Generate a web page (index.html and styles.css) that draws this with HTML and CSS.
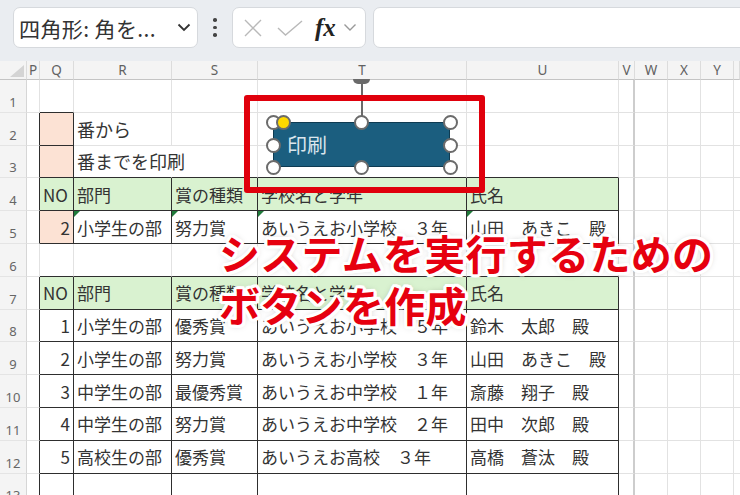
FILE: index.html
```html
<!DOCTYPE html>
<html lang="ja">
<head>
<meta charset="utf-8">
<title>Excel</title>
<link rel="stylesheet" href="styles.css">
</head>
<body>
<div class="app">
  <div class="toolbar">
    <div class="namebox">
      <span class="nb-text">四角形: 角を...</span>
      <svg class="chev" width="14" height="9" viewBox="0 0 14 9"><polyline points="1.5,1.5 7,7 12.5,1.5" fill="none" stroke="#333" stroke-width="1.8"/></svg>
    </div>
    <div class="dots"><i></i><i></i><i></i></div>
    <div class="fbtns">
      <svg class="ico-x" width="20" height="20" viewBox="0 0 20 20"><path d="M2 2 L18 18 M18 2 L2 18" fill="none" stroke="#b9b9b9" stroke-width="1.4"/></svg>
      <svg class="ico-ok" width="26" height="16" viewBox="0 0 26 16"><polyline points="1,8 8.5,15 25,1" fill="none" stroke="#b9b9b9" stroke-width="1.4"/></svg>
      <span class="fx">fx</span>
      <svg class="chev-s" width="14" height="9" viewBox="0 0 14 9"><polyline points="1.5,1.5 7,7 12.5,1.5" fill="none" stroke="#999" stroke-width="1.4"/></svg>
    </div>
    <div class="fbar"></div>
  </div>

  <div class="sheet">
    <div class="row head">
      <div class="corner"><span class="corner-tri"></span></div>
      <div class="ch">P</div><div class="ch">Q</div><div class="ch">R</div><div class="ch">S</div><div class="ch">T</div><div class="ch">U</div><div class="ch">V</div><div class="ch">W</div><div class="ch">X</div><div class="ch">Y</div><div class="ch"></div>
    </div>

    <div class="row">
      <div class="rn">1</div>
      <div class="c"></div><div class="c eb"></div><div class="c"></div><div class="c"></div><div class="c"></div><div class="c"></div><div class="c v"></div><div class="c"></div><div class="c"></div><div class="c"></div><div class="c"></div>
    </div>

    <div class="row">
      <div class="rn">2</div>
      <div class="c er"></div><div class="c b pe"></div><div class="c big">番から</div><div class="c"></div><div class="c"></div><div class="c"></div><div class="c v"></div><div class="c"></div><div class="c"></div><div class="c"></div><div class="c"></div>
    </div>

    <div class="row">
      <div class="rn">3</div>
      <div class="c er"></div><div class="c b pe"></div><div class="c eb over big">番までを印刷</div><div class="c eb"></div><div class="c eb"></div><div class="c eb"></div><div class="c v"></div><div class="c"></div><div class="c"></div><div class="c"></div><div class="c"></div>
    </div>

    <div class="row">
      <div class="rn">4</div>
      <div class="c er"></div><div class="c b gr">NO</div><div class="c b gr">部門</div><div class="c b gr">賞の種類</div><div class="c b gr">学校名と学年</div><div class="c b gr">氏名</div><div class="c v"></div><div class="c"></div><div class="c"></div><div class="c"></div><div class="c"></div>
    </div>

    <div class="row">
      <div class="rn">5</div>
      <div class="c er"></div><div class="c b pe num">2</div><div class="c b flag">小学生の部</div><div class="c b flag">努力賞</div><div class="c b flag">あいうえお小学校　３年</div><div class="c b flag">山田　あきこ　殿</div><div class="c v"></div><div class="c"></div><div class="c"></div><div class="c"></div><div class="c"></div>
    </div>

    <div class="row">
      <div class="rn">6</div>
      <div class="c"></div><div class="c eb"></div><div class="c eb"></div><div class="c eb"></div><div class="c eb"></div><div class="c eb"></div><div class="c v"></div><div class="c"></div><div class="c"></div><div class="c"></div><div class="c"></div>
    </div>

    <div class="row">
      <div class="rn">7</div>
      <div class="c er"></div><div class="c b gr">NO</div><div class="c b gr">部門</div><div class="c b gr">賞の種類</div><div class="c b gr">学校名と学年</div><div class="c b gr">氏名</div><div class="c v"></div><div class="c"></div><div class="c"></div><div class="c"></div><div class="c"></div>
    </div>

    <div class="row">
      <div class="rn">8</div>
      <div class="c er"></div><div class="c b num">1</div><div class="c b">小学生の部</div><div class="c b">優秀賞</div><div class="c b">あいうえお小学校　５年</div><div class="c b">鈴木　太郎　殿</div><div class="c v"></div><div class="c"></div><div class="c"></div><div class="c"></div><div class="c"></div>
    </div>

    <div class="row">
      <div class="rn">9</div>
      <div class="c er"></div><div class="c b num">2</div><div class="c b">小学生の部</div><div class="c b">努力賞</div><div class="c b">あいうえお小学校　３年</div><div class="c b">山田　あきこ　殿</div><div class="c v"></div><div class="c"></div><div class="c"></div><div class="c"></div><div class="c"></div>
    </div>

    <div class="row">
      <div class="rn">10</div>
      <div class="c er"></div><div class="c b num">3</div><div class="c b">中学生の部</div><div class="c b">最優秀賞</div><div class="c b">あいうえお中学校　１年</div><div class="c b">斎藤　翔子　殿</div><div class="c v"></div><div class="c"></div><div class="c"></div><div class="c"></div><div class="c"></div>
    </div>

    <div class="row">
      <div class="rn">11</div>
      <div class="c er"></div><div class="c b num">4</div><div class="c b">中学生の部</div><div class="c b">努力賞</div><div class="c b">あいうえお中学校　２年</div><div class="c b">田中　次郎　殿</div><div class="c v"></div><div class="c"></div><div class="c"></div><div class="c"></div><div class="c"></div>
    </div>

    <div class="row">
      <div class="rn">12</div>
      <div class="c er"></div><div class="c b num">5</div><div class="c b">高校生の部</div><div class="c b">優秀賞</div><div class="c b">あいうえお高校　３年</div><div class="c b">高橋　蒼汰　殿</div><div class="c v"></div><div class="c"></div><div class="c"></div><div class="c"></div><div class="c"></div>
    </div>

    <div class="row">
      <div class="rn">13</div>
      <div class="c er"></div><div class="c b"></div><div class="c b"></div><div class="c b"></div><div class="c b"></div><div class="c b"></div><div class="c v"></div><div class="c"></div><div class="c"></div><div class="c"></div><div class="c"></div>
    </div>
  </div>

  <!-- selected shape overlay -->
  <div class="rot-line"></div>
  <div class="rot-knob"></div>
  <div class="shape">印刷</div>
  <span class="hd h-tl"></span>
  <span class="hd h-tm"></span>
  <span class="hd h-tr"></span>
  <span class="hd h-ml"></span>
  <span class="hd h-mr"></span>
  <span class="hd h-bl"></span>
  <span class="hd h-bm"></span>
  <span class="hd h-br"></span>
  <span class="hd h-adj"></span>

  <div class="redbox"></div>

  <div class="caption">
    <div>システムを実行するための</div>
    <div>ボタンを作成</div>
  </div>
</div>
</body>
</html>
```

FILE: styles.css
```css
* { box-sizing: border-box; margin: 0; padding: 0; }

html, body {
  width: 740px;
  height: 495px;
  overflow: hidden;
  background: #fff;
}

body {
  font-family: "Noto Sans CJK JP", "Noto Sans", sans-serif;
  color: #333;
}

.app {
  position: relative;
  width: 740px;
  height: 495px;
  overflow: hidden;
}

/* ---------- toolbar ---------- */
.toolbar {
  height: 61px;
  background: #eaedf1;
  display: flex;
  align-items: flex-start;
  padding: 7px 0 0 13px;
  overflow: hidden;
}

.namebox {
  width: 185px;
  height: 41px;
  background: #fff;
  border: 1px solid #d6d9dd;
  border-radius: 7px;
  display: flex;
  align-items: center;
  justify-content: space-between;
  padding: 0 6px 0 5px;
}

.nb-text {
  font-size: 21px;
  color: #333;
  white-space: nowrap;
  letter-spacing: 0.4px;
}

.dots {
  width: 34px;
  height: 41px;
  display: flex;
  flex-direction: column;
  align-items: center;
  justify-content: center;
  gap: 4px;
}

.dots i {
  display: block;
  width: 3.5px;
  height: 3.5px;
  border-radius: 50%;
  background: #444;
}

.fbtns {
  width: 134px;
  height: 41px;
  background: #fff;
  border: 1px solid #d6d9dd;
  border-radius: 7px;
  display: flex;
  align-items: center;
  padding-left: 10px;
}

.ico-ok { margin-left: 14px; }

.fx {
  margin-left: 12px;
  font-family: "Liberation Serif", serif;
  font-style: italic;
  font-weight: 700;
  font-size: 25px;
  color: #222;
  line-height: 1;
}

.chev-s { margin-left: 7px; }

.fbar {
  flex: 1;
  height: 41px;
  margin-left: 7px;
  margin-right: -10px;
  background: #fff;
  border: 1px solid #d6d9dd;
  border-radius: 7px;
}

/* ---------- sheet ---------- */
.row {
  display: grid;
  grid-template-columns: 27px 13px 34px 98px 86px 209px 152px 16px 33px 33px 33px 1fr;
  height: 32.8px;
}

.row.head {
  height: 19px;
  background: #f4f4f4;
}

.corner {
  border-right: 1px solid #dcdcdc;
  border-bottom: 1px solid #c4c4c4;
  display: flex;
  align-items: flex-end;
  justify-content: flex-end;
  padding: 0 2px 2px 0;
}

.corner-tri {
  width: 0;
  height: 0;
  border-left: 14px solid transparent;
  border-bottom: 12px solid #d4d4d4;
}

.ch {
  border-right: 1px solid #dcdcdc;
  border-bottom: 1px solid #c4c4c4;
  font-family: "Noto Sans", sans-serif;
  font-size: 13.5px;
  color: #616161;
  display: flex;
  align-items: center;
  justify-content: center;
}

.rn {
  background: #f4f4f4;
  border-right: 1px solid #d6d6d6;
  border-bottom: 1px solid #e4e4e4;
  font-family: "Noto Sans", sans-serif;
  font-size: 13px;
  color: #666;
  display: flex;
  align-items: flex-end;
  justify-content: center;
  padding-bottom: 1px;
}

.c {
  position: relative;
  border-right: 1px solid #e2e2e2;
  border-bottom: 1px solid #e2e2e2;
  display: flex;
  align-items: center;
  padding: 0 3px;
  white-space: nowrap;
  font-size: 17px;
  color: #333;
}

.c.big { font-size: 18px; }

.c.v { border-right: 2px solid #cdcdcd; }

.c.b {
  border-right-color: #2e2e2e;
  border-bottom-color: #2e2e2e;
}

.c.er { border-right-color: #2e2e2e; }
.c.eb { border-bottom-color: #2e2e2e; }

.c.over {
  overflow: visible;
  border-right-color: transparent;
  z-index: 1;
}

.pe { background: #fce2d4; }
.gr { background: #d9f2d0; }

.num { justify-content: flex-end; }

.flag::before {
  content: "";
  position: absolute;
  top: 0;
  left: 0;
  border-top: 6px solid #1f7a3a;
  border-right: 6px solid transparent;
}

/* ---------- shape selection overlay ---------- */
.rot-line {
  position: absolute;
  left: 361px;
  top: 80px;
  width: 1.5px;
  height: 36px;
  background: #6a6a6a;
}

.rot-knob {
  position: absolute;
  left: 353px;
  top: 79px;
  width: 17px;
  height: 5px;
  background: #6a6a6a;
  border-radius: 0 0 9px 9px;
}

.shape {
  position: absolute;
  left: 273px;
  top: 122px;
  width: 177px;
  height: 45px;
  background: #1b5e7f;
  border: 1px solid #0e3b52;
  color: #dbe6ed;
  font-size: 20px;
  display: flex;
  align-items: center;
  padding-left: 13px;
}

.hd {
  position: absolute;
  width: 15px;
  height: 15px;
  border-radius: 50%;
  background: #fff;
  border: 2.5px solid #6b6b6b;
}

.h-tl { left: 266px; top: 114.5px; }
.h-tm { left: 354px; top: 114.5px; }
.h-tr { left: 443px; top: 114.5px; }
.h-ml { left: 266px; top: 137.5px; }
.h-mr { left: 443px; top: 137.5px; }
.h-bl { left: 266px; top: 160px; }
.h-bm { left: 354px; top: 160px; }
.h-br { left: 443px; top: 160px; }
.h-adj { left: 275.5px; top: 114.5px; background: #ffd900; }

.redbox {
  position: absolute;
  left: 244px;
  top: 95px;
  width: 241px;
  height: 98px;
  border: 6.5px solid #e0000c;
  border-radius: 3px;
}

.caption {
  position: absolute;
  left: 219px;
  top: 226px;
  font-size: 41px;
  font-weight: 700;
  line-height: 52px;
  letter-spacing: 0.3px;
  color: #e6000f;
  white-space: nowrap;
  text-shadow:
    3px 0 0 #fff, -3px 0 0 #fff, 0 3px 0 #fff, 0 -3px 0 #fff,
    2px 2px 0 #fff, -2px 2px 0 #fff, 2px -2px 0 #fff, -2px -2px 0 #fff,
    3px 1.5px 0 #fff, -3px 1.5px 0 #fff, 3px -1.5px 0 #fff, -3px -1.5px 0 #fff,
    1.5px 3px 0 #fff, -1.5px 3px 0 #fff, 1.5px -3px 0 #fff, -1.5px -3px 0 #fff,
    0 0 7px rgba(0, 0, 0, 0.35);
}
```
